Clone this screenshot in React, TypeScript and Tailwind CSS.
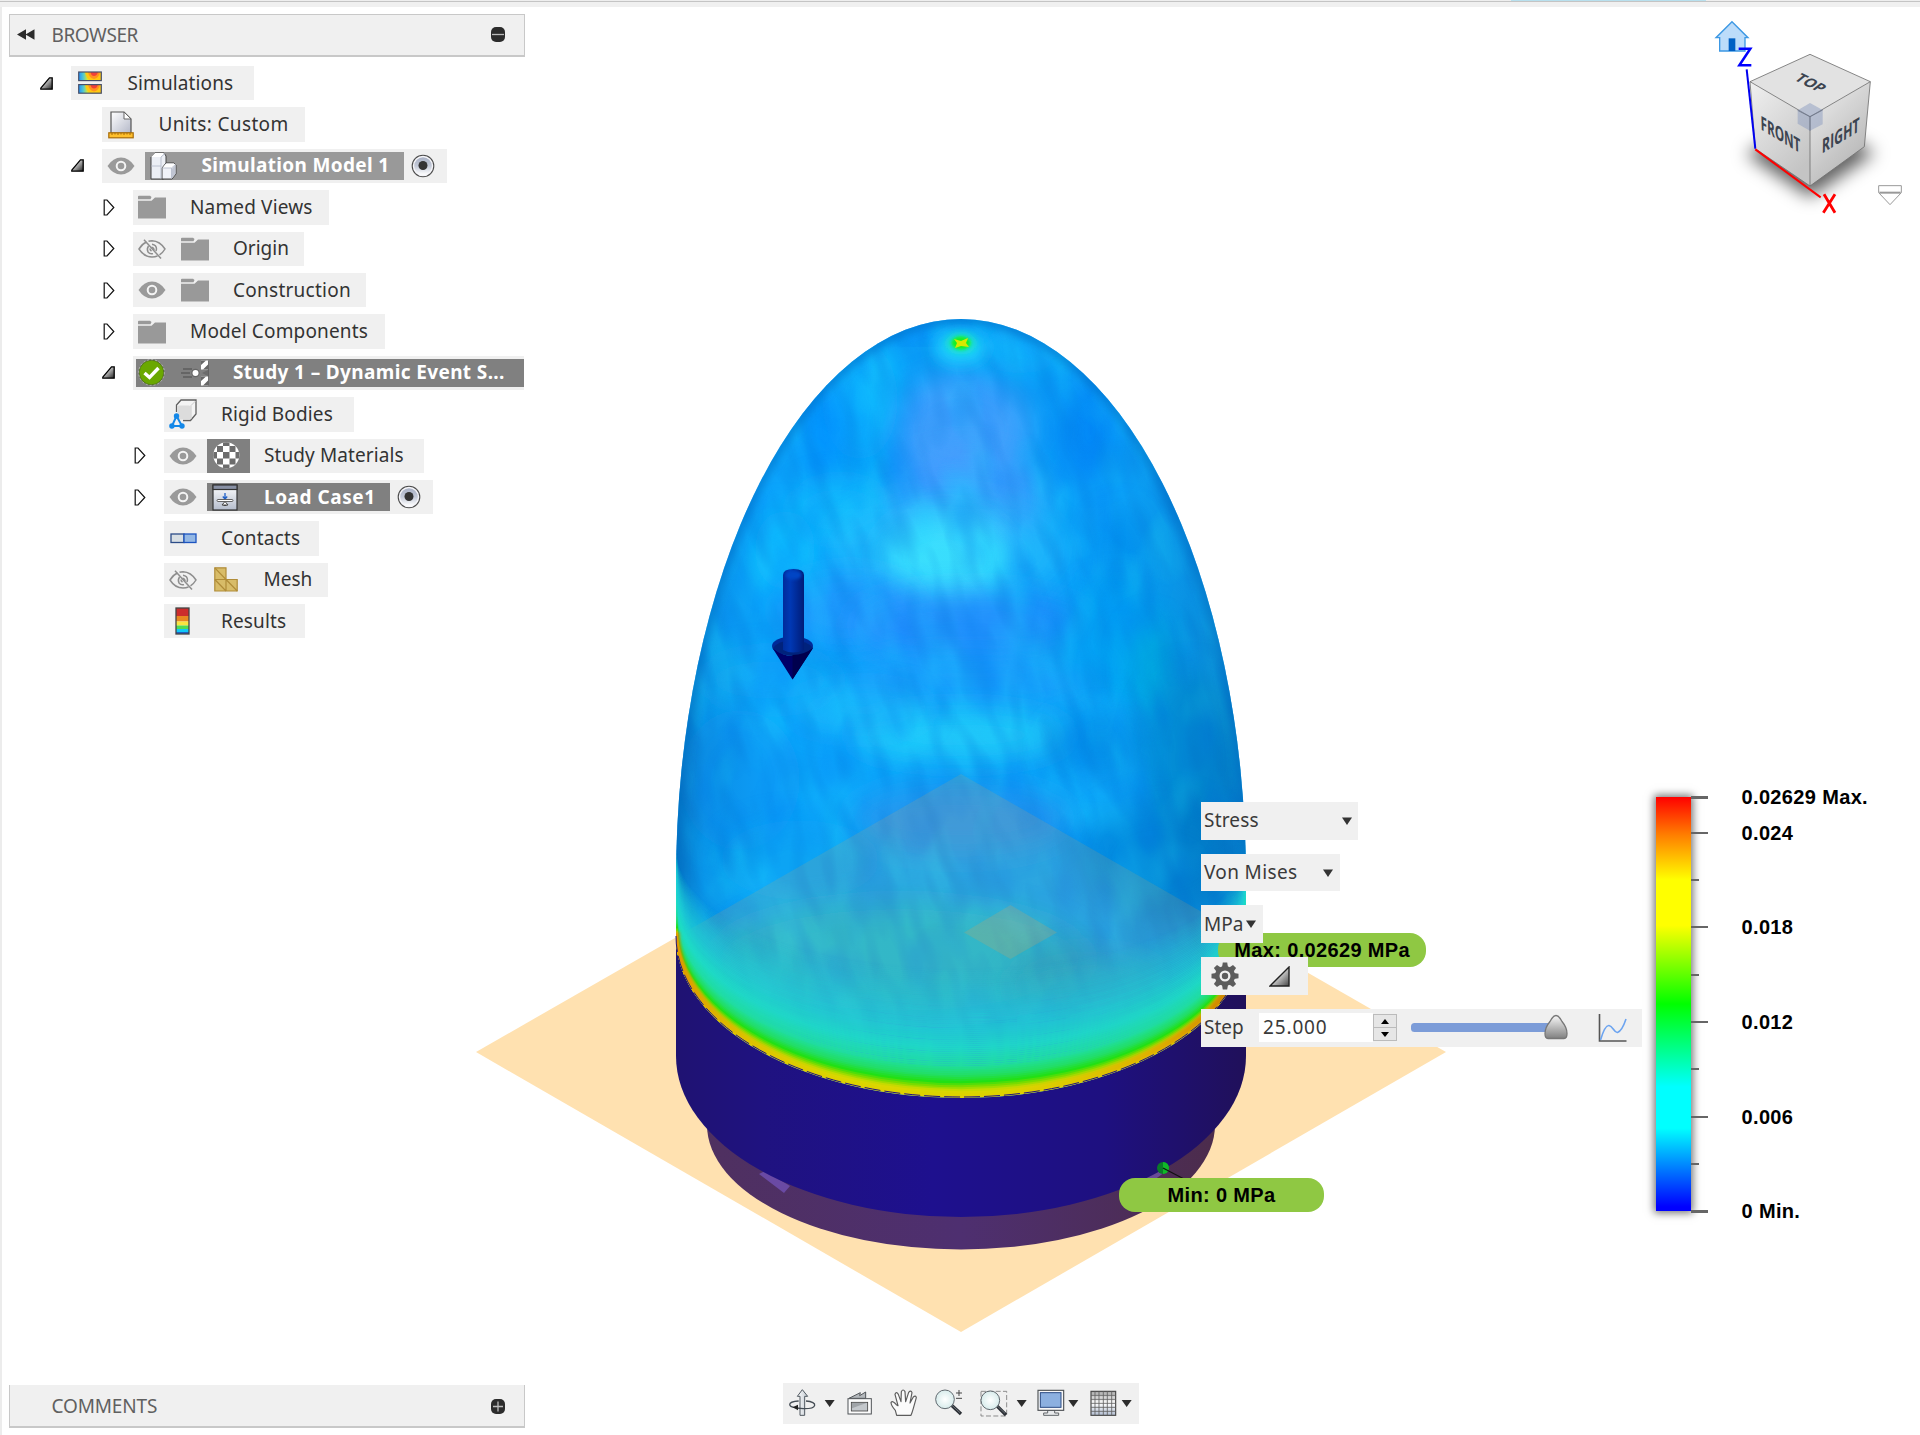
import type { ReactNode } from "react";

/* ---------- 3D viewport ---------- */

const RIM_STOPS: [number, number, number, number, number][] = [
  [0, 224, 208, 0, 1],
  [6, 214, 220, 0, 1],
  [11, 120, 220, 0, 1],
  [15, 34, 224, 20, 1],
  [22, 34, 222, 100, 1],
  [32, 32, 222, 158, 0.97],
  [50, 30, 220, 196, 0.88],
  [78, 30, 208, 212, 0.55],
  [130, 30, 196, 215, 0],
];

function rimColor(off: number): string {
  for (let i = 1; i < RIM_STOPS.length; i++) {
    const a = RIM_STOPS[i - 1];
    const b = RIM_STOPS[i];
    if (off <= b[0]) {
      const t = (off - a[0]) / (b[0] - a[0]);
      const m = (k: number) => a[k] + (b[k] - a[k]) * t;
      return `rgba(${m(1).toFixed(0)},${m(2).toFixed(0)},${m(3).toFixed(0)},${m(4).toFixed(3)})`;
    }
  }
  return "transparent";
}

/* Iso-stress line at a height above the rim; the lines draw together towards the sides. */
function rimPath(off: number): string {
  const y = 937 - off * 0.68;
  return `M676 ${y}A285 ${161 - off * 0.32} 0 0 0 1246 ${y}`;
}

const DOME = "M676 937V880A285 561 0 0 1 1246 880V937A285 161 0 0 1 676 937Z";
const RIM_OFFSETS = Array.from({ length: 65 }, (_, i) => 129 - i * 2);

const BLOTCHES: [number, number, number, number, string, number][] = [
  [961, 430, 70, 55, "#4fa2ff", 0.8],
  [965, 500, 80, 50, "#4a9cff", 0.8],
  [860, 400, 38, 60, "#08b8ff", 0.7],
  [825, 430, 25, 45, "#008cff", 0.7],
  [1020, 350, 40, 14, "#14b8ff", 0.7],
  [925, 327, 34, 9, "#0080f8", 0.8],
  [1090, 430, 30, 50, "#0080f8", 0.7],
  [840, 510, 50, 30, "#18c8ff", 0.6],
  [945, 552, 120, 55, "#2cc4ff", 0.6],
  [945, 558, 62, 42, "#3ce4ff", 0.9],
  [785, 550, 30, 40, "#10c4ff", 0.7],
  [850, 610, 70, 36, "#2896ff", 0.7],
  [970, 625, 120, 34, "#2c8cff", 0.75],
  [970, 680, 130, 26, "#2c9cff", 0.5],
  [1120, 560, 26, 50, "#0490f0", 0.8],
  [1120, 640, 60, 60, "#04a4f4", 0.7],
  [770, 680, 70, 28, "#14b4fa", 0.7],
  [960, 735, 110, 26, "#22ccfa", 0.9],
  [860, 710, 70, 22, "#22bcfc", 0.6],
  [1150, 670, 22, 50, "#04bce8", 0.7],
  [1100, 745, 50, 28, "#0484e0", 0.6],
  [740, 780, 60, 70, "#0898f4", 0.7],
  [1190, 760, 50, 90, "#0494dc", 0.7],
  [961, 820, 110, 34, "#2a96ee", 0.8],
  [800, 860, 80, 40, "#08a4f0", 0.6],
  [1160, 860, 80, 60, "#0484d8", 0.7],
  [900, 960, 190, 60, "#18bcdc", 0.95],
  [1090, 985, 80, 34, "#1ca0cc", 0.6],
];

function Viewport() {
  return (
    <svg className="absolute inset-0" width="1920" height="1435" viewBox="0 0 1920 1435">
      <defs>
        <clipPath id="dome"><path d={DOME} /></clipPath>
        <linearGradient id="cyl" x1="0" x2="1">
          <stop offset="0" stopColor="#1f1272" />
          <stop offset=".15" stopColor="#1f1280" />
          <stop offset=".45" stopColor="#1e108e" />
          <stop offset=".75" stopColor="#1e1080" />
          <stop offset="1" stopColor="#20105a" />
        </linearGradient>
        <linearGradient id="base" x1="0" x2="1">
          <stop offset="0" stopColor="#4f3060" />
          <stop offset=".5" stopColor="#4e2f70" />
          <stop offset="1" stopColor="#4c2c4c" />
        </linearGradient>
        <linearGradient id="shade" x1="0" x2="1">
          <stop offset="0" stopColor="#003c70" stopOpacity=".35" />
          <stop offset=".05" stopColor="#003c70" stopOpacity=".12" />
          <stop offset=".15" stopColor="#003c70" stopOpacity="0" />
          <stop offset=".78" stopColor="#003c70" stopOpacity=".02" />
          <stop offset="1" stopColor="#003c70" stopOpacity=".3" />
        </linearGradient>
        <linearGradient id="rimSide" x1="676" x2="1246" gradientUnits="userSpaceOnUse">
          <stop offset="0" stopColor="#e08400" stopOpacity=".8" />
          <stop offset=".12" stopColor="#e0a800" stopOpacity=".5" />
          <stop offset=".3" stopColor="#e0d000" stopOpacity=".2" />
          <stop offset=".6" stopColor="#e0c000" stopOpacity=".25" />
          <stop offset=".85" stopColor="#e0a000" stopOpacity=".8" />
          <stop offset="1" stopColor="#c87800" stopOpacity="1" />
        </linearGradient>
        <linearGradient id="shaft" x1="0" x2="1">
          <stop offset="0" stopColor="#002c9c" />
          <stop offset=".35" stopColor="#0038b4" />
          <stop offset="1" stopColor="#001c78" />
        </linearGradient>
        <filter id="b16" x="-60%" y="-60%" width="220%" height="220%"><feGaussianBlur stdDeviation="14" /></filter>
        <filter id="b8" x="-80%" y="-80%" width="260%" height="260%"><feGaussianBlur stdDeviation="8" /></filter>
        <filter id="b4" x="-60%" y="-60%" width="220%" height="220%"><feGaussianBlur stdDeviation="4" /></filter>
        <filter id="b2" x="-60%" y="-60%" width="220%" height="220%"><feGaussianBlur stdDeviation="1.6" /></filter>
        <filter id="cyanNoise" x="0" y="0" width="100%" height="100%" colorInterpolationFilters="sRGB">
          <feTurbulence type="fractalNoise" baseFrequency="0.021 0.013" numOctaves="2" seed="7" />
          <feColorMatrix values="0 0 0 0 .12  0 0 0 0 .84  0 0 0 0 1  2.8 0 0 0 -1.3" />
        </filter>
        <filter id="blueNoise" x="0" y="0" width="100%" height="100%" colorInterpolationFilters="sRGB">
          <feTurbulence type="fractalNoise" baseFrequency="0.026 0.014" numOctaves="2" seed="21" />
          <feColorMatrix values="0 0 0 0 0  0 0 0 0 .48  0 0 0 0 .96  0 2.8 0 0 -1.35" />
        </filter>
        <filter id="ripple" x="0" y="0" width="100%" height="100%" colorInterpolationFilters="sRGB">
          <feTurbulence type="fractalNoise" baseFrequency="0.065 0.02" numOctaves="1" seed="4" />
          <feColorMatrix values="0 0 0 0 0  0 0 0 0 .44  0 0 0 0 .85  0 3 0 0 -1.35" />
        </filter>
      </defs>

      <path d="M961 774L1446 1052L961 1332L476 1052Z" fill="#ffe1b0" />

      <path d="M707 1060V1125A254 124.500 0 0 0 1215 1125V1060Z" fill="url(#base)" />
      <path d="M759 1174L765 1171L790 1186L784 1193Z" fill="#6a4aa4" />
      <path d="M1146 1178L1162 1166L1168 1170L1154 1180Z" fill="#6a4a98" />
      <path d="M676 900V1056A285 161 0 0 0 1246 1056V900Z" fill="url(#cyl)" />

      <g clipPath="url(#dome)">
        <rect x="670" y="310" width="590" height="800" fill="#0ca4fb" />
        {BLOTCHES.map(([cx, cy, rx, ry, fill, o], i) => (
          <ellipse key={i} cx={cx} cy={cy} rx={rx} ry={ry} fill={fill} opacity={o} filter="url(#b16)" />
        ))}
        <g opacity=".45">
          <rect x="670" y="310" width="590" height="800" filter="url(#cyanNoise)" opacity=".8" />
          <rect x="670" y="310" width="590" height="800" filter="url(#blueNoise)" opacity=".7" />
          <g transform="rotate(-18 961 710)">
            <rect x="500" y="180" width="930" height="1060" filter="url(#ripple)" opacity=".5" />
          </g>
        </g>
        <rect x="676" y="310" width="570" height="800" fill="url(#shade)" />
        <path d="M676 900V880A285 561 0 0 1 1246 880V900" fill="none" stroke="#0068c0" strokeOpacity=".6" strokeWidth="9" filter="url(#b4)" />
        <path d="M961 774L1446 1052L961 1332L476 1052Z" fill="#ffa83c" fillOpacity=".13" />
        {RIM_OFFSETS.map((off) => (
          <path key={off} d={rimPath(off)} fill="none" stroke={rimColor(off)} strokeWidth={off > 30 ? 2.2 : 3.6} />
        ))}
        <path d="M1010.500 905L1057 932.500L1010.500 959L964 932.500Z" fill="#ffa03c" fillOpacity=".18" />
        <path d="M676 932A285 161 0 0 0 1246 932" fill="none" stroke="url(#rimSide)" strokeWidth="7" filter="url(#b2)" />
        <ellipse cx="961" cy="348" rx="26" ry="16" fill="#20d4ff" opacity=".95" filter="url(#b8)" />
        <ellipse cx="961" cy="343" rx="14" ry="9" fill="#14e8b0" filter="url(#b4)" />
        <ellipse cx="961" cy="343" rx="9.500" ry="6.500" fill="#18f020" filter="url(#b2)" />
        <path d="M954 339L961 341L968 338L966 343L969 347L961 346L955 348L957 343Z" fill="#d8e800" />
      </g>
      <path d="M676 936A285 161 0 0 0 1246 936" fill="none" stroke="#1f1280" strokeWidth="1" strokeDasharray="16 4" />

      <ellipse cx="792.500" cy="646" rx="20.500" ry="9.500" fill="#002a98" />
      <path d="M772.500 648Q792 664 813 648L792.500 679.500Z" fill="#000068" />
      <path d="M773 648Q792 664 813 648Q808 641 792 640Q778 641 773 648Z" fill="#00227c" />
      <path d="M792.500 655L792.500 679.500L813 648Q804 655 792.500 655Z" fill="#00004e" />
      <path d="M783 575Q783 569 793.500 569Q804 569 804 575V650Q793 655 783 650Z" fill="url(#shaft)" />
      <ellipse cx="793.500" cy="575" rx="8" ry="4.500" fill="#0044c4" filter="url(#b2)" />

      <ellipse cx="1163" cy="1168" rx="6" ry="6" fill="#0a7a28" />
      <path d="M1163 1162a6 6 0 0 1 0 12Z" fill="#10b828" />
      <path d="M1163 1168L1184 1179" stroke="#111" strokeWidth="1.200" />
    </svg>
  );
}

/* ---------- browser tree icons ---------- */

function Eye() {
  return (
    <svg width="28" height="20" viewBox="0 0 28 20">
      <path d="M0.500 10Q6 1.500 14 1.500T27.500 10Q22 18.500 14 18.500T0.500 10Z" fill="#9a9a9a" />
      <circle cx="14" cy="10" r="4.300" fill="none" stroke="#f4f4f4" strokeWidth="2" />
    </svg>
  );
}

function EyeOff() {
  return (
    <svg width="28" height="20" viewBox="0 0 28 20" fill="none" stroke="#8e8e8e" strokeWidth="1.500">
      <path d="M8.500 3Q4 5 1 10Q6 18 14 18Q17 18 19.500 17" />
      <path d="M10.500 2.200Q12 1.700 14 1.700Q22 2 27 10Q25 13.500 21.500 15.800" />
      <path d="M10.500 7Q8.500 10 10 13Q12 15.500 15 14.600M14 5.200Q18.500 6 18.500 10L18 12.200M13.500 8.300Q16 9 16 11M12 9.500Q11.800 11 13.500 12.200" />
      <path d="M6 0.800L23 19.500" />
    </svg>
  );
}

function FolderIcon() {
  return (
    <svg width="28" height="24" viewBox="0 0 28 24" fill="#999">
      <path d="M0 1.500Q0 .8 1 .8H12L13.500 2L12.500 4.300H0Z" />
      <path d="M0 5.800H13.500L17 2.600H28V23.500H0Z" />
    </svg>
  );
}

function SimulationsIcon() {
  const bar = (y: number) => (
    <g key={y}>
      <rect x=".7" y={y} width="22.600" height="8.600" fill="url(#rain)" />
      <path d={`M7 ${y}Q8 ${y + 7} 13 ${y + 8.600}H23V${y}Z`} fill="#ffc810" />
      <path d={`M10 ${y}Q11 ${y + 6} 16 ${y + 7}Q21 ${y + 6} 22 ${y}Z`} fill="#ff9020" />
      <path d={`M12.500 ${y}Q13 ${y + 4} 16 ${y + 4}T20 ${y}Z`} fill="#f04038" />
      <rect x=".7" y={y} width="22.600" height="8.600" fill="none" stroke="#48506a" strokeWidth="1.200" />
    </g>
  );
  return (
    <svg width="24" height="24" viewBox="0 0 24 24" className="ml-0.5">
      <defs>
        <linearGradient id="rain" x1="0" x2="1">
          <stop offset="0" stopColor="#2090ff" /><stop offset=".2" stopColor="#50c8d0" /><stop offset=".4" stopColor="#d8e830" />
          <stop offset=".6" stopColor="#ffd010" /><stop offset="1" stopColor="#ffc020" />
        </linearGradient>
      </defs>
      {bar(1)}{bar(13.600)}
    </svg>
  );
}

function UnitsIcon() {
  return (
    <svg width="26" height="28" viewBox="0 0 26 28" className="ml-[0.500px]">
      <defs><linearGradient id="doc" x1="0" y1="0" x2="1" y2="1"><stop offset="0" stopColor="#fff" /><stop offset="1" stopColor="#b4b8c8" /></linearGradient></defs>
      <path d="M3 22V1H16L23 8V22Z" fill="url(#doc)" stroke="#555" strokeWidth="1.200" />
      <path d="M16 1V8H23Z" fill="#fff" stroke="#666" strokeWidth="1" />
      <rect x=".8" y="21.800" width="24.400" height="5" fill="#ffc02c" stroke="#a86c08" strokeWidth="1.200" />
      <path d="M4 22v2M7 22v1.500M10 22v2M13 22v1.500M16 22v2M19 22v1.500M22 22v2" stroke="#a86c08" strokeWidth="1" />
    </svg>
  );
}

function ModelIcon() {
  return (
    <svg width="27" height="28" viewBox="0 0 27 28" stroke="#444" strokeWidth="1" strokeLinejoin="round">
      <path d="M1 5L5 1H14L16 4V26L13 27H1Z" fill="#eceff5" />
      <path d="M1 5L5 1H14L11 5Z" fill="#fff" stroke="none" />
      <path d="M12 16L16 11H24L26 13V22L22 27H12Z" fill="#f0f2f8" />
      <path d="M12.500 16L16 11.500H24L25.500 13L22 16Z" fill="#fff" stroke="none" />
      <path d="M1.500 14H11M11 5L15 1.500M11 5V26.500M12.500 16H21.500L25.500 12.500M21.500 16V26.500" stroke="#bcc2d0" fill="none" />
      <path d="M22 16.500L25.500 13V22L22 26Z" fill="#c0c5d2" stroke="none" />
    </svg>
  );
}

function Radio() {
  return (
    <svg width="24" height="24" viewBox="0 0 24 24">
      <defs><linearGradient id="rad" x1="0" y1="0" x2="0" y2="1"><stop offset="0" stopColor="#a8b0c4" /><stop offset=".5" stopColor="#c4cad8" /><stop offset="1" stopColor="#fff" /></linearGradient></defs>
      <circle cx="12" cy="12" r="10.800" fill="#f6f6fa" stroke="#4c4c4c" strokeWidth="1.100" />
      <circle cx="12" cy="12" r="8.800" fill="url(#rad)" />
      <circle cx="12" cy="11.500" r="4.500" fill="#333" />
    </svg>
  );
}

function CheckBadge() {
  return (
    <svg width="27" height="27" viewBox="0 0 27 27">
      <circle cx="13.500" cy="13.500" r="12.300" fill="#6aa800" stroke="#4c6a20" strokeWidth=".8" />
      <circle cx="13.500" cy="13.500" r="12.900" fill="none" stroke="#ccc" strokeWidth=".7" strokeDasharray="2 2" />
      <path d="M6.500 14L11.500 18.500L20.500 9" fill="none" stroke="#fff" strokeWidth="3.400" />
    </svg>
  );
}

function EventIcon() {
  return (
    <svg width="28" height="26" viewBox="0 0 28 26">
      <path d="M2 9H11M0 13H9M2 17H11" stroke="#5c5c5c" strokeWidth="1.400" />
      <circle cx="14.500" cy="13" r="4.200" fill="#666" />
      <circle cx="14.500" cy="13" r="3" fill="#fff" />
      <rect x="20" y=".5" width="7.500" height="9" fill="#fff" /><rect x="20" y="16.500" width="7.500" height="9" fill="#fff" />
      <path d="M20 5L25 .5H20ZM22 9.500L27.500 4V9.500ZM20 21L25 16.500H20ZM22 25.500L27.500 20V25.500Z" fill="#666" />
      <path d="M27.700 .5V25.500" stroke="#5c5c5c" strokeWidth="1" />
      <path d="M21 13L27 10V16Z" fill="#6c6c6c" />
    </svg>
  );
}

function RigidIcon() {
  return (
    <svg width="28" height="30" viewBox="0 0 28 30">
      <path d="M7.500 13V6L12 1H27V15L21.500 21.500H14" fill="#f4f4f4" stroke="#606060" strokeWidth="1.300" />
      <rect x="8.500" y="6.500" width="13" height="14" rx="1.500" fill="#dcdcdc" />
      <path d="M22 6.500L26.500 2M22 6.500V20" stroke="#ccc" strokeWidth="1" fill="none" />
      <path d="M7.500 17L3 27H13Z" fill="#f2f2f2" stroke="#1488e8" strokeWidth="2" />
      <circle cx="7.500" cy="17" r="2.700" fill="#1488e8" /><circle cx="2.900" cy="27" r="2.700" fill="#1488e8" /><circle cx="13" cy="27" r="2.700" fill="#1488e8" />
    </svg>
  );
}

function MaterialIcon() {
  const edges = [0, 4, 10, 16.500, 22.500, 26.500];
  const cells: ReactNode[] = [];
  for (let r = 0; r < 5; r++)
    for (let c = 0; c < 5; c++)
      if ((r + c) % 2 === 0)
        cells.push(<rect key={`${r}-${c}`} x={edges[c]} y={edges[r]} width={edges[c + 1] - edges[c]} height={edges[r + 1] - edges[r]} fill="#6c6c6c" />);
  return (
    <svg width="27" height="27" viewBox="0 0 27 27">
      <clipPath id="ball"><circle cx="13.300" cy="13.300" r="13" /></clipPath>
      <g clipPath="url(#ball)"><rect width="27" height="27" fill="#fff" />{cells}</g>
    </svg>
  );
}

function LoadIcon() {
  return (
    <svg width="26" height="27" viewBox="0 0 26 27">
      <defs><linearGradient id="lc" x1="0" y1="0" x2="0" y2="1"><stop offset="0" stopColor="#fff" /><stop offset="1" stopColor="#b4bccc" /></linearGradient></defs>
      <rect x="1" y="1" width="24" height="25" fill="url(#lc)" stroke="#333" strokeWidth="1.200" />
      <rect x="1" y="1" width="24" height="4.500" fill="#8890a4" stroke="#333" strokeWidth="1.200" />
      <path d="M13 9V14M10.800 12.500L13 15L15.200 12.500" stroke="#2060c8" strokeWidth="1.300" fill="none" />
      <rect x="5" y="15.500" width="16" height="2" rx="1" fill="#fff" stroke="#555" strokeWidth=".9" />
      <path d="M13 17.500L16 21H10ZM11.500 21.500h3" fill="#fff" stroke="#444" strokeWidth="1" />
    </svg>
  );
}

function ContactsIcon() {
  return (
    <svg width="27" height="11" viewBox="0 0 27 11" strokeWidth="1.300" className="ml-[0.500px]">
      <rect x="1" y="1" width="13" height="8.500" fill="#d8dfe4" stroke="#2c4c88" />
      <rect x="14" y="1" width="12" height="8.500" fill="#94b8e4" stroke="#1c54c0" />
    </svg>
  );
}

function MeshIcon() {
  return (
    <svg width="24" height="25" viewBox="0 0 24 25" fill="#d8bc68" stroke="#b08c38" strokeWidth="1.200">
      <path d="M.8 .8H12V12.500H23.200V24H.8Z" />
      <path d="M.8 12.500H12V24M.8 .8L12 12.500M.8 12.500L12 24M12 12.500L23.200 24" fill="none" />
    </svg>
  );
}

function ResultsIcon() {
  return (
    <svg width="27" height="28" viewBox="0 0 27 28">
      <path d="M7 1H20V9H7Z" fill="#cc2c2c" /><path d="M7 9H20V14.500H7Z" fill="#e88820" /><path d="M7 14.500H20V18.500H7Z" fill="#f8e440" />
      <path d="M7 18.500H20V22H7Z" fill="#50dc50" /><path d="M7 22H20V25H7Z" fill="#10c8f8" /><path d="M7 25H20V27H7Z" fill="#2060c0" />
      <rect x="7" y="1" width="13" height="26" fill="none" stroke="#444" strokeWidth="1.300" />
    </svg>
  );
}

function Expander({ open }: { open?: boolean }) {
  return open ? (
    <svg width="13" height="13" viewBox="0 0 13 13">
      <defs><linearGradient id="tri" x1="0" y1="0" x2="1" y2="1"><stop offset=".3" stopColor="#ddd" /><stop offset="1" stopColor="#222" /></linearGradient></defs>
      <path d="M.8 11.200L9.500 .8H12.200V12.200H.8Z" fill="url(#tri)" stroke="#000" strokeWidth="1.300" />
    </svg>
  ) : (
    <svg className="ml-px" width="12" height="17" viewBox="0 0 12 17">
      <path d="M1.200 1H4L10.800 8.500L4 16H1.200Z" fill="#fff" stroke="#111" strokeWidth="1.200" />
    </svg>
  );
}

/* ---------- browser tree ---------- */

const Slot = ({ children, className = "" }: { children: ReactNode; className?: string }) => (
  <div className={`flex h-full w-[43px] shrink-0 items-center ${className}`}>{children}</div>
);
const Label = ({ children, className = "ml-[9px]" }: { children: ReactNode; className?: string }) => (
  <span className={`whitespace-pre ${className}`}>{children}</span>
);

function Row({ indent, exp, box, children }: { indent: string; exp?: "open" | "closed"; box: string; children: ReactNode }) {
  return (
    <div className={`flex h-[34.400px] items-center ${indent}`}>
      <div className="flex w-[31px] shrink-0 items-center">{exp && <Expander open={exp === "open"} />}</div>
      <div className={`flex h-full items-center bg-[#f0f0f0] ${box}`}>{children}</div>
    </div>
  );
}

function Tree() {
  return (
    <div className="mt-[9.500px] flex flex-col gap-[7px] text-[19px] leading-none text-[#333]">
      <Row indent="pl-[40px]" exp="open" box="w-[183px] pl-[5px]"><Slot><SimulationsIcon /></Slot><Label className="ml-[8.500px] tracking-[0.120px]">Simulations</Label></Row>
      <Row indent="pl-[71px]" box="w-[203px] pl-[5px]"><Slot><UnitsIcon /></Slot><Label className="ml-[8.500px] tracking-[0.350px]">Units: Custom</Label></Row>
      <Row indent="pl-[71px]" exp="open" box="w-[345px]">
        <Slot className="pl-[5px]"><Eye /></Slot>
        <div className="flex h-[28px] w-[259px] items-center bg-[#999] pl-[5px] font-bold text-white"><Slot><ModelIcon /></Slot><Label className="ml-[8.500px] tracking-[0.350px]">Simulation Model 1</Label></div>
        <div className="ml-[7px]"><Radio /></div>
      </Row>
      <Row indent="pl-[102px]" exp="closed" box="w-[196px] pl-[5px]"><Slot><FolderIcon /></Slot><Label className="ml-[9px] tracking-[0.150px]">Named Views</Label></Row>
      <Row indent="pl-[102px]" exp="closed" box="w-[171px] pl-[5px]"><Slot><EyeOff /></Slot><Slot><FolderIcon /></Slot><Label>Origin</Label></Row>
      <Row indent="pl-[102px]" exp="closed" box="w-[232.500px] pl-[5px]"><Slot><Eye /></Slot><Slot><FolderIcon /></Slot><Label className="ml-[9px] tracking-[0.260px]">Construction</Label></Row>
      <Row indent="pl-[102px]" exp="closed" box="w-[251.500px] pl-[5px]"><Slot><FolderIcon /></Slot><Label className="ml-[9px] tracking-[0.150px]">Model Components</Label></Row>
      <Row indent="pl-[102px]" exp="open" box="w-[391px] pl-[3px]">
        <div className="flex h-[27.500px] w-full items-center bg-[#808080] pl-[2px] font-bold text-white"><Slot><CheckBadge /></Slot><Slot><EventIcon /></Slot><Label className="ml-[9px] tracking-[0.370px]">Study 1 – Dynamic Event S...</Label></div>
      </Row>
      <Row indent="pl-[133px]" box="w-[189.500px] pl-[5px]"><Slot><RigidIcon /></Slot><Label className="ml-[9px] tracking-[0.150px]">Rigid Bodies</Label></Row>
      <Row indent="pl-[133px]" exp="closed" box="w-[260px]">
        <Slot className="pl-[5px]"><Eye /></Slot><Slot className="bg-[#808080] pl-[5.500px]"><MaterialIcon /></Slot><Label className="ml-[14px] tracking-[0.100px]">Study Materials</Label>
      </Row>
      <Row indent="pl-[133px]" exp="closed" box="w-[269px]">
        <Slot className="pl-[5px]"><Eye /></Slot>
        <div className="flex h-[28px] w-[183px] items-center bg-[#808080] pl-[5px] font-bold text-white"><Slot><LoadIcon /></Slot><Label className="ml-[9px] tracking-[0.550px]">Load Case1</Label></div>
        <div className="ml-[7px]"><Radio /></div>
      </Row>
      <Row indent="pl-[133px]" box="w-[155px] pl-[5px]"><Slot><ContactsIcon /></Slot><Label className="ml-[9px] tracking-[0.180px]">Contacts</Label></Row>
      <Row indent="pl-[133px]" box="w-[163.500px] pl-[5px]"><Slot><EyeOff /></Slot><Slot className="pl-[2px]"><MeshIcon /></Slot><Label className="ml-[8.500px]">Mesh</Label></Row>
      <Row indent="pl-[133px]" box="w-[141px] pl-[5px]"><Slot><ResultsIcon /></Slot><Label className="ml-[9px] tracking-[0.150px]">Results</Label></Row>
    </div>
  );
}

function RoundKey({ plus }: { plus?: boolean }) {
  return (
    <svg width="14" height="15" viewBox="0 0 14 15">
      <rect width="14" height="15" rx="5" fill="#2c2c2c" />
      <path d={plus ? "M2 7.500H12M7 2.500V12.500" : "M1 7.500H13"} stroke="#bbb" strokeWidth="1.300" />
    </svg>
  );
}

function LeftColumn() {
  return (
    <div className="relative flex h-[1435px] w-[525px] flex-col justify-between pt-[14px] pb-[7px]">
      <div>
        <div className="ml-[8.500px] flex h-[42.500px] items-center border-x border-t border-b-2 border-[#c8c8c8] bg-[#f0f0f0] pr-[19px] pl-[7px] text-[19px] text-[#606060]">
          <svg width="18" height="11" viewBox="0 0 18 11" fill="#2c2c2c"><path d="M9 .3V10.700L0 5.500ZM17.500 .3V10.700L8.500 5.500Z" /></svg>
          <span className="ml-[17px] tracking-[-0.400px]">BROWSER</span>
          <div className="ml-auto"><RoundKey /></div>
        </div>
        <Tree />
      </div>
      <div className="ml-[8.500px] flex h-[43px] items-center border-x border-b-2 border-[#c8c8c8] bg-[#f0f0f0] pt-px pr-[19px] pl-[42px] text-[19px] text-[#606060]">
        <span className="tracking-[-0.150px]">COMMENTS</span>
        <div className="ml-auto"><RoundKey plus /></div>
      </div>
    </div>
  );
}

/* ---------- view cube ---------- */

function ViewCube() {
  return (
    <svg className="absolute top-0 left-[1680px]" width="240" height="230" viewBox="0 0 720 690" fontFamily="'Open Sans','Noto Sans',sans-serif">
      <defs>
        <filter id="cubeBlur" x="-40%" y="-40%" width="180%" height="180%"><feGaussianBlur stdDeviation="26" /></filter>
        <linearGradient id="ff" x1="0" y1="0" x2=".6" y2="1"><stop offset="0" stopColor="#f0f0f0" /><stop offset="1" stopColor="#c4c4c4" /></linearGradient>
        <linearGradient id="fr" x1="0" y1="0" x2=".6" y2="1"><stop offset="0" stopColor="#f0f0f0" /><stop offset="1" stopColor="#b4b4b4" /></linearGradient>
      </defs>
      <path d="M390 350L585 458L390 592L198 462Z" fill="#000" fillOpacity=".62" filter="url(#cubeBlur)" />
      <path d="M390 163L571 245L390 350L210 245Z" fill="#e2e2e2" />
      <path d="M210 245L390 350V558L226 446Z" fill="url(#ff)" />
      <path d="M571 245L390 350V558L553 440Z" fill="url(#fr)" />
      <path d="M390 163L571 245L553 440L390 558L226 446L210 245ZM210 245L390 350L571 245M390 350V558" fill="none" stroke="#707070" strokeWidth="2.500" />
      <path d="M390 309L428 330V373L390 392L353 371V331Z" fill="#8c9cc0" fillOpacity=".5" />
      <path d="M353 331L390 350L428 330M390 350V392" stroke="#6c7484" strokeWidth="2.500" fill="none" />
      <g fill="#3c4450" fontWeight="700" fontSize="56" textAnchor="middle">
        <text transform="matrix(.7 .36 -.62 .5 380 259)">TOP</text>
        <text transform="matrix(.63 .38 .03 1.050 302 424)">FRONT</text>
        <text transform="matrix(.66 -.4 -.02 1.050 482 427)">RIGHT</text>
      </g>
      <path d="M156 65L204 113H195V153H119V113H108Z" fill="#bcdcfa" stroke="#3c98e4" strokeWidth="4" />
      <path d="M146 115H166V153H146Z" fill="#0060c4" />
      <path d="M200 208L226 446" stroke="#0000f0" strokeWidth="6" />
      <path d="M226 448L422 592" stroke="#f00" strokeWidth="6" />
      <path d="M176 146H211L178 196H214" stroke="#0000ff" strokeWidth="7.500" fill="none" />
      <path d="M432 583L465 638M465 583L430 638" stroke="#ff0000" strokeWidth="8.500" />
      <path d="M596 557H664V578L630 614L596 578Z" fill="#fff" stroke="#999" strokeWidth="3" />
      <path d="M598 578H662" stroke="#999" strokeWidth="6" />
    </svg>
  );
}

/* ---------- result controls ---------- */

const Caret = ({ className = "" }: { className?: string }) => (
  <svg className={className} width="10" height="8" viewBox="0 0 10 8"><path d="M0 .5H10L5 8Z" fill="#333" /></svg>
);

function GearIcon() {
  const teeth = [0, 45, 90, 135, 180, 225, 270, 315];
  return (
    <svg width="28" height="28" viewBox="-14 -14 28 28">
      {teeth.map((a) => <path key={a} d="M-3 -9L-2.200 -13.500H2.200L3 -9Z" fill="#5c5c5c" transform={`rotate(${a})`} />)}
      <circle r="7.800" fill="none" stroke="#5c5c5c" strokeWidth="4.600" />
      <circle r="3.200" fill="#5c5c5c" />
    </svg>
  );
}

function Controls() {
  const box = "flex h-[37.600px] items-center bg-[#f0f0f0] pl-[3px]";
  return (
    <div className="absolute top-[802px] left-[1201px] flex flex-col items-start gap-[14.150px] text-[19px] leading-none text-[#3a3a3a]">
      <div className={`${box} w-[156.500px] justify-between pr-[5.500px]`}><span className="tracking-[0.200px]">Stress</span><Caret /></div>
      <div className={`${box} w-[139px] justify-between pr-[7px]`}><span className="tracking-[0.350px]">Von Mises</span><Caret /></div>
      <div className={`${box} w-[62px] justify-between pr-[7.500px]`}><span>MPa</span><Caret /></div>
      <div className={`${box} w-[106.500px]`}>
        <div className="ml-[7px]"><GearIcon /></div>
        <svg className="ml-[29.500px]" width="21" height="21" viewBox="0 0 21 21">
          <defs><linearGradient id="wedge" x1="0" y1="0" x2="1" y2="1"><stop offset=".35" stopColor="#eee" /><stop offset="1" stopColor="#444" /></linearGradient></defs>
          <path d="M1 20L20 1V20Z" fill="url(#wedge)" stroke="#222" strokeWidth="1.400" />
        </svg>
      </div>
      <div className={`${box} w-[441px]`}>
        <span className="w-[55px]">Step</span>
        <div className="flex h-[29.500px] w-[114px] items-center bg-white pl-[4px] tracking-[0.850px]">25.000</div>
        <div className="flex h-[27px] w-[24px] flex-col border border-[#bbb] bg-[#e6e6e6]">
          <div className="flex flex-1 items-center justify-center border-b border-[#bbb]"><svg width="8" height="5" viewBox="0 0 8 5"><path d="M4 0L8 5H0Z" /></svg></div>
          <div className="flex flex-1 items-center justify-center"><svg width="8" height="5" viewBox="0 0 8 5"><path d="M4 5L8 0H0Z" /></svg></div>
        </div>
        <svg className="ml-[13px]" width="160" height="28" viewBox="0 0 160 28">
          <defs><linearGradient id="knob" x1="0" y1="0" x2="0" y2="1"><stop offset="0" stopColor="#f8f8f8" /><stop offset="1" stopColor="#808080" /></linearGradient></defs>
          <rect x="1" y="9" width="146" height="9" rx="3.500" fill="#7c9cd8" />
          <path d="M146 1.500Q149 1.500 152 7.500Q157 13.500 157 19.500Q157 24.500 154 24.500H138Q135 24.500 135 19.500Q135 13.500 140 7.500Q143 1.500 146 1.500Z" fill="url(#knob)" stroke="#777" strokeWidth="1.300" />
        </svg>
        <svg className="ml-[28px]" width="29" height="28" viewBox="0 0 29 28" fill="none">
          <path d="M1.500 0V27H28.500" stroke="#555" strokeWidth="1.600" />
          <path d="M2.500 26Q7 11 11 11.500C15 12 16 19 19.500 18.500Q24 17 28 5" stroke="#6ca4f0" strokeWidth="1.600" />
        </svg>
      </div>
    </div>
  );
}

function Pill({ place, children }: { place: string; children: ReactNode }) {
  return (
    <div className={`absolute flex h-[34px] items-center rounded-[16px] bg-[#8fc843] font-['Liberation_Sans',sans-serif] text-[20px] leading-none font-bold tracking-[0.350px] text-black ${place}`}>
      {children}
    </div>
  );
}

/* ---------- colour legend ---------- */

function Legend() {
  const ticks: [string, string, string?][] = [
    ["top-0", "w-[17px] h-[3px]", "0.02629 Max."],
    ["top-[36px]", "w-[17px] h-[2px]", "0.024"],
    ["top-[83px]", "w-[8px] h-[2px]"],
    ["top-[130px]", "w-[17px] h-[2px]", "0.018"],
    ["top-[177.500px]", "w-[8px] h-[2px]"],
    ["top-[225px]", "w-[17px] h-[2px]", "0.012"],
    ["top-[272px]", "w-[8px] h-[2px]"],
    ["top-[319.500px]", "w-[17px] h-[2px]", "0.006"],
    ["top-[366.500px]", "w-[8px] h-[2px]"],
    ["top-[414px]", "w-[17px] h-[3px]", "0 Min."],
  ];
  return (
    <div className="absolute top-[797px] left-[1656px] flex h-[414px] w-[254px] font-['Liberation_Sans',sans-serif] text-[20px] leading-none font-bold tracking-[0.350px] text-black">
      <div className="w-[35px] bg-[linear-gradient(180deg,#f00_0%,#ff7c00_9%,#ff0_20%,#ff0_31%,#0f0_50%,#0ff_70%,#0ff_80%,#00f_99%)] shadow-[0_0_8px_2px_rgba(0,0,0,0.55)]" />
      <div className="relative flex-1">
        {ticks.map(([pos, size, label]) => (
          <div key={pos} className={`absolute left-0 flex h-0 items-center ${pos}`}>
            <div className={`bg-[#666] ${size}`} />
            {label && <span className="ml-[33.500px] whitespace-pre">{label}</span>}
          </div>
        ))}
      </div>
    </div>
  );
}

/* ---------- navigation bar ---------- */

function Seg({ x, w, children }: { x: number; w: number; children: ReactNode }) {
  return <svg width={w / 3} height="41.330" viewBox={`${x} 40 ${w} 124`} className="shrink-0">{children}</svg>;
}
const Down = ({ cx }: { cx: number }) => <path d={`M${cx - 15} 91H${cx + 15}L${cx} 112Z`} fill="#2c2c2c" />;

function NavBar() {
  return (
    <div className="absolute top-[1383px] left-[783px] flex bg-[#f0f0f0]">
      <Seg x={39} w={111}>
        <defs>
          <linearGradient id="steel" x1="0" x2="1"><stop offset="0" stopColor="#fff" /><stop offset="1" stopColor="#c0c8d0" /></linearGradient>
          <radialGradient id="glass"><stop offset="0" stopColor="#fff" /><stop offset="1" stopColor="#d8ecec" /></radialGradient>
        </defs>
        <path d="M90 137V80H82L97 60L113 80H104V137Z" fill="url(#steel)" stroke="#505860" strokeWidth="3" />
        <path d="M86 94C48 96 56 112 76 114M108 94C146 97 142 118 100 117L78 115" fill="none" stroke="#444c54" strokeWidth="4" />
        <path d="M68 113L84 105V122Z" fill="#222" />
      </Seg>
      <Seg x={150} w={62}><Down cx={179} /></Seg>
      <Seg x={212} w={113}>
        <path d="M236 86L270 69L268 78L286 67V86Z" fill="#b4b8bc" stroke="#505458" strokeWidth="3" />
        <rect x="233" y="87" width="70" height="46" fill="#fcfcfc" stroke="#505458" strokeWidth="3" />
        <rect x="243" y="98" width="49" height="26" fill="#c4c8cc" stroke="#444" strokeWidth="2.500" />
        <path d="M245 100H288L245 116Z" fill="#a0a4a8" />
      </Seg>
      <Seg x={325} w={140}>
        <path d="M381 137L377 122Q364 108 364 98Q370 92 380 105L385 108L376 74Q380 64 386 74L394 96L395 66Q400 56 406 66L408 96L417 68Q424 60 427 69L421 100L431 82Q438 76 440 84L431 116Q427 130 424 137Z" fill="#fbfbfb" stroke="#5c5c5c" strokeWidth="3.500" strokeLinejoin="round" />
      </Seg>
      <Seg x={465} w={135}>
        <path d="M544 106L573 133" stroke="#2c3036" strokeWidth="10" /><path d="M546 107L570 129" stroke="#788088" strokeWidth="2.500" />
        <circle cx="525" cy="89" r="28" fill="url(#glass)" stroke="#60686e" strokeWidth="3" />
        <path d="M558 70H576M567 61V79M558 86H576" stroke="#444" strokeWidth="3" />
      </Seg>
      <Seg x={600} w={125}>
        <rect x="633" y="65" width="77" height="74" fill="none" stroke="#777" strokeWidth="2.500" strokeDasharray="15 7" />
        <path d="M680 108L708 136" stroke="#2c3036" strokeWidth="10" /><path d="M682 109L705 131" stroke="#788088" strokeWidth="2.500" />
        <circle cx="661" cy="92" r="28" fill="url(#glass)" stroke="#60686e" strokeWidth="3" />
      </Seg>
      <Seg x={725} w={57}><Down cx={754} /></Seg>
      <Seg x={782} w={108}>
        <path d="M832 121H853V130H865V137H820V130H832Z" fill="#e8eaec" stroke="#606468" strokeWidth="3" />
        <rect x="803" y="62" width="77" height="60" fill="#f8f8f8" stroke="#505458" strokeWidth="3.500" />
        <rect x="810" y="69" width="62" height="44" fill="#8cb0e0" stroke="#2c4c84" strokeWidth="3" />
      </Seg>
      <Seg x={890} w={50}><Down cx={909} /></Seg>
      <Seg x={940} w={110}>
        <defs><linearGradient id="grd" x1="0" y1="0" x2="0" y2="1"><stop offset="0" stopColor="#a8a8a8" /><stop offset=".5" stopColor="#fff" /><stop offset="1" stopColor="#b0bcd0" /></linearGradient></defs>
        <rect x="964" y="65" width="74" height="72" fill="url(#grd)" stroke="#484848" strokeWidth="3.500" />
        <path d="M976 65V137M988 65V137M1001 65V137M1013 65V137M1026 65V137M964 77H1038M964 89H1038M964 101H1038M964 113H1038M964 125H1038" stroke="#606060" strokeWidth="2.500" />
      </Seg>
      <Seg x={1050} w={56}><Down cx={1070} /></Seg>
    </div>
  );
}

export default function App() {
  return (
    <div className="relative h-[1435px] w-[1920px] overflow-hidden bg-white font-['Noto_Sans','Open_Sans',sans-serif]">
      <Viewport />
      <div className="absolute inset-y-0 left-0 w-[2px] bg-[#ececec]" />
      <div className="absolute inset-x-0 top-0 h-[7px] bg-[#f0f0f0]">
        <div className="h-[2px] border-b border-[#c4c4c4] bg-[#eee]" />
        <div className="absolute top-0 left-[1511px] h-px w-[195px] bg-[#b8e0ee]" />
      </div>
      <LeftColumn />
      <ViewCube />
      <Pill place="top-[933px] left-[1218px] w-[208px] justify-end pr-[16px]">Max: 0.02629 MPa</Pill>
      <Pill place="top-[1178px] left-[1119px] w-[205px] justify-center">Min: 0 MPa</Pill>
      <Controls />
      <Legend />
      <NavBar />
    </div>
  );
}
